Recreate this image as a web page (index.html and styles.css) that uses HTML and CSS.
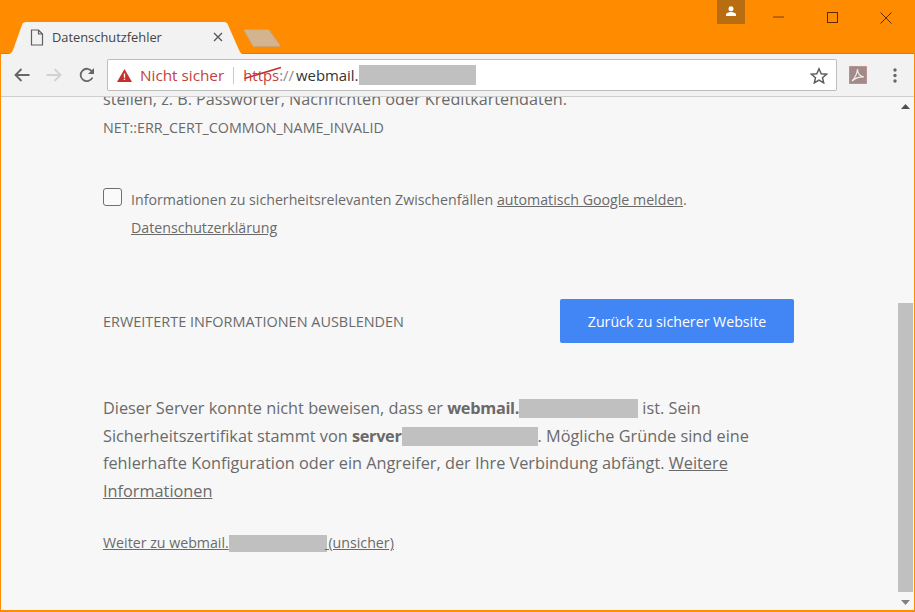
FILE: index.html
```html
<!DOCTYPE html>
<html lang="de">
<head>
<meta charset="utf-8">
<title>Datenschutzfehler</title>
<link rel="stylesheet" href="styles.css">
</head>
<body>
<div class="window">
  <header class="titlebar">
    <div class="tab">
      <svg class="tab-shape" width="236" height="33" viewBox="0 0 236 33"><path d="M0 33 L1 33 C4 33 5 31 6 29 L15 4 C16 1 18 1 20 1 L216 1 C218 1 220 1 221 4 L232 29 C233 31 234 33 236 33 Z" fill="#f2f2f2"/></svg>
      <svg class="tab-icon" width="14" height="17" viewBox="0 0 14 17"><path d="M1.500 1h7L12.500 5v11h-11z M8.500 1V5h4" fill="none" stroke="#5f5f5f" stroke-width="1.200"/></svg>
      <span class="tab-title">Datenschutzfehler</span>
      <svg class="tab-close" width="10" height="10" viewBox="0 0 10 10"><path d="M1 1l8 8M9 1l-8 8" stroke="#555" stroke-width="1.300"/></svg>
    </div>
    <svg class="new-tab" width="38" height="18" viewBox="0 0 38 18"><path d="M1 1.500C1 .8 1.500.5 2 .5H25c.8 0 1.200.3 1.500 1L37 16c.3.7 0 1.500-1 1.500H11c-.8 0-1.200-.3-1.500-1Z" fill="#d4b48f" stroke="#c9a06e" stroke-width=".8"/></svg>
    <div class="window-controls">
      <div class="profile"><svg width="12" height="10" viewBox="0 0 12 10"><circle cx="6" cy="2.800" r="2.500" fill="#fff"/><path d="M1 10V8.500C1 7 4 6 6 6s5 1 5 2.500V10Z" fill="#fff"/></svg></div>
      <svg class="ctl ctl-min" width="12" height="12" viewBox="0 0 12 12"><path d="M0 5h11" stroke="#7a3b00" stroke-width="1"/></svg>
      <svg class="ctl ctl-max" width="12" height="12" viewBox="0 0 12 12"><rect x=".5" y=".5" width="10" height="10" fill="none" stroke="#5a2a00" stroke-width="1"/></svg>
      <svg class="ctl ctl-close" width="12" height="12" viewBox="0 0 12 12"><path d="M.5.500l11 11M11.500.500l-11 11" stroke="#5a2a00" stroke-width="1"/></svg>
    </div>
  </header>

  <nav class="toolbar">
    <svg class="nav-btn" width="16" height="14" viewBox="0 0 16 14"><path d="M15.500 7H2M7.500 1 1.500 7l6 6" fill="none" stroke="#666" stroke-width="1.800"/></svg>
    <svg class="nav-btn" width="16" height="14" viewBox="0 0 16 14"><path d="M.5 7H14M8.500 1l6 6-6 6" fill="none" stroke="#d2d2d2" stroke-width="1.800"/></svg>
    <svg class="nav-btn nav-reload" width="16" height="16" viewBox="0 0 16 16"><path d="M13.500 10.500A6.200 6.200 0 1 1 13 4.500" fill="none" stroke="#666" stroke-width="1.800"/><path d="M15 1v6H9z" fill="#666"/></svg>
    <div class="omnibox">
      <svg class="warn" width="15" height="13" viewBox="0 0 15 13"><path d="M7.500 0 15 13H0Z" fill="#c5302a"/><path d="M6.800 4.500h1.400v4.300H6.800zM6.800 9.700h1.400v1.400H6.800z" fill="#fff"/></svg>
      <span class="not-secure">Nicht sicher</span>
      <span class="omni-sep"></span>
      <span class="url"><span class="scheme"><span class="https">https</span><span class="slashes">://</span></span>webmail.<span class="redact redact-url"></span></span>
      <svg class="strike" width="38" height="14" viewBox="0 0 38 14"><path d="M.5 12.500 37 1.500" stroke="#c5302a" stroke-width="1.500"/></svg>
      <svg class="star" width="18" height="17" viewBox="0 0 18 17"><path d="M9 1.800l2.200 4.900 5.300.5-4 3.500 1.200 5.200L9 13.200l-4.700 2.700 1.200-5.200-4-3.500 5.300-.5Z" fill="none" stroke="#5f5f5f" stroke-width="1.500"/></svg>
    </div>
    <div class="pdf"><svg width="18" height="18" viewBox="0 0 18 18"><rect width="18" height="18" fill="#a08a8a" stroke="#d69a9a"/><path d="M3 15C6 12 8 8 8.500 3c0 4 2 7 6.500 8-4-.3-8 .8-12 4Z" fill="none" stroke="#f4eaea" stroke-width="1.200"/></svg></div>
    <svg class="menu" width="4" height="15" viewBox="0 0 4 15"><circle cx="2" cy="2" r="1.700" fill="#666"/><circle cx="2" cy="7.500" r="1.700" fill="#666"/><circle cx="2" cy="13" r="1.700" fill="#666"/></svg>
  </nav>

  <div class="viewport">
    <main class="page">
      <p class="clipped">stellen, z. B. Passwörter, Nachrichten oder Kreditkartendaten.</p>
      <p class="error-code">NET::ERR_CERT_COMMON_NAME_INVALID</p>
      <div class="optin">
        <span class="checkbox"></span>
        <p class="optin-text">Informationen zu sicherheitsrelevanten Zwischenfällen <a href="#">automatisch Google melden</a>.<br><a href="#">Datenschutzerklärung</a></p>
      </div>
      <div class="actions">
        <span class="details">ERWEITERTE INFORMATIONEN AUSBLENDEN</span>
        <button class="primary">Zurück zu sicherer Website</button>
      </div>
      <p class="explain">Dieser Server konnte nicht beweisen, dass er <b>webmail.</b><span class="redact redact-a"></span> ist. Sein Sicherheitszertifikat stammt von <b>server</b><span class="redact redact-b"></span>. Mögliche Gründe sind eine fehlerhafte Konfiguration oder ein Angreifer, der Ihre Verbindung abfängt. <a href="#">Weitere Informationen</a></p>
      <p class="proceed"><a href="#">Weiter zu webmail.<span class="redact redact-c"></span> (unsicher)</a></p>
    </main>
    <div class="scrollbar">
      <svg class="arrow" width="9" height="5" viewBox="0 0 9 5"><path d="M4.500 0 9 5H0Z" fill="#505050"/></svg>
      <div class="track"><div class="thumb"></div></div>
      <svg class="arrow" width="9" height="5" viewBox="0 0 9 5"><path d="M0 0H9L4.500 5Z" fill="#808080"/></svg>
    </div>
  </div>
</div>
</body>
</html>
```
FILE: styles.css
```css
* { box-sizing: border-box; }
html, body { margin: 0; height: 100%; overflow: hidden; }
body { background: #ff8c00; font-family: "Open Sans", "Noto Sans", sans-serif; color: #6a6a6a; }
.window { width: 915px; height: 612px; display: flex; flex-direction: column; padding: 0 1px 2px; background: #ff8c00; }

.titlebar { height: 54px; flex: none; display: flex; align-items: flex-end; position: relative; border-bottom: 1px solid #d97f0c; }
.tab { width: 236px; height: 33px; margin-left: 6px; margin-bottom: -1px; position: relative; display: flex; align-items: center; padding: 0 0 1px 23px; }
.tab-shape { position: absolute; left: 0; top: 0; }
.tab-icon, .tab-title, .tab-close { position: relative; }
.tab-title { font-size: 12.850px; color: #444; margin-left: 8px; flex: 1; }
.tab-close { margin-right: 20px; }
.new-tab { margin: 0 0 6px 0; }
.window-controls { position: absolute; right: 0; top: 0; display: flex; align-items: flex-start; }
.profile { width: 28px; height: 24px; background: #b86d10; display: flex; justify-content: center; padding-top: 6px; margin-right: 28px; }
.ctl { margin-top: 12px; }
.ctl-min { margin-right: 42px; }
.ctl-max { margin-right: 41px; }
.ctl-close { margin-right: 22px; }

.toolbar { height: 43px; flex: none; background: #f2f2f2; display: flex; align-items: center; padding: 0 12px 0 13px; border-bottom: 1px solid #cfcfcf; }
.nav-btn { margin-right: 16px; flex: none; }
.nav-reload { margin-left: 1px; margin-right: 15px; }
.omnibox { width: 730px; height: 32px; margin-left: -3px; background: #fff; border: 1px solid #bdbdbd; border-radius: 2px; display: flex; align-items: center; padding-left: 9px; position: relative; }
.warn { flex: none; }
.not-secure { color: #c5403a; font-size: 15.300px; margin-left: 8px; }
.omni-sep { width: 1px; height: 17px; background: #c9c9c9; margin: 0 9px; }
.url { font-size: 14.900px; color: #333; display: flex; align-items: center; }
.scheme { color: #888; margin-right: 2px; }
.https { color: #c5403a; }
.strike { position: absolute; left: 136px; top: 6px; }
.star { position: absolute; right: 8px; top: 7px; }
.pdf { margin-left: 12px; height: 18px; flex: none; }
.menu { margin-left: 26px; flex: none; }

.redact { display: inline-block; background: #c0c0c0; vertical-align: middle; }
.redact-url { width: 117px; height: 20px; }

.viewport { flex: 1; min-height: 0; display: flex; background: #f7f7f7; overflow: hidden; }
.page { flex: 1; padding: 0 0 0 102px; overflow: hidden; }
.clipped { margin: -11px 0 0; font-size: 16.200px; line-height: 27px; }
.error-code { margin: 5px 0 0; font-size: 14.300px; line-height: 20px; }
.optin { display: flex; margin-top: 48px; }
.checkbox { width: 19px; height: 18px; border: 1px solid #6f6f6f; border-radius: 3px; flex: none; margin-top: 2px; background: #fafafa; }
.optin-text { margin: 0 0 0 9px; font-size: 14.200px; line-height: 28px; padding-top: 0; }
.optin-text a, .explain a, .proceed a { color: inherit; text-decoration: underline; }
.actions { display: flex; justify-content: space-between; align-items: center; margin-top: 57px; height: 44px; padding-right: 104px; }
.details { font-size: 14.450px; }
.primary { width: 234px; height: 44px; background: #4285f4; color: #fff; border: 0; border-radius: 2px; font: 500 14.200px "Open Sans", "Noto Sans", sans-serif; }
.explain { margin: 52px 0 0; font-size: 16.300px; line-height: 27.700px; width: 680px; }
.explain b { letter-spacing: -0.3px; }
.redact-a { width: 119px; height: 19px; vertical-align: -4px; }
.redact-b { width: 136px; height: 19px; vertical-align: -4px; }
.proceed { margin: 27px 0 0; font-size: 14.200px; line-height: 20px; }
.redact-c { width: 98px; height: 17px; vertical-align: -4px; margin-right: -2px; }

.scrollbar { width: 15px; margin-right: 1px; flex: none; display: flex; flex-direction: column; align-items: center; background: #f7f7f7; padding: 7px 0 5px; }
.track { flex: 1; width: 100%; display: flex; flex-direction: column; justify-content: flex-end; padding-top: 5px; padding-bottom: 8px; }
.thumb { height: 289px; background: #c0c0c0; }
```
